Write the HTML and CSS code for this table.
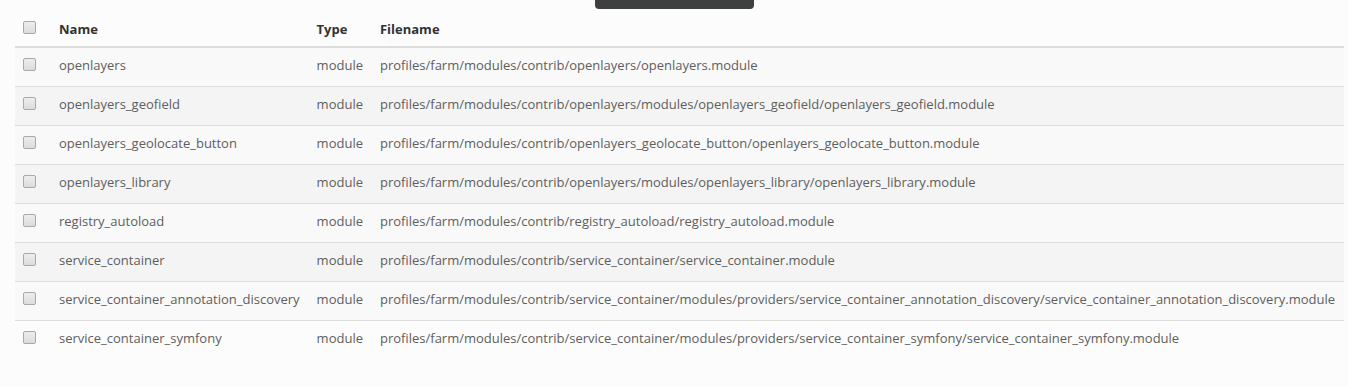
FILE: index.html
```html
<!DOCTYPE html>
<html>
<head>
<meta charset="utf-8">
<link rel="stylesheet" href="styles.css">
</head>
<body>
<div class="tip"></div>
<div class="page">
<table class="tbl">
<thead>
<tr><th class="sel"><span class="cb"></span></th><th>Name</th><th>Type</th><th>Filename</th></tr>
</thead>
<tbody>
<tr><td class="sel"><span class="cb"></span></td><td>openlayers</td><td>module</td><td>profiles/farm/modules/contrib/openlayers/openlayers.module</td></tr>
<tr><td class="sel"><span class="cb"></span></td><td>openlayers_geofield</td><td>module</td><td>profiles/farm/modules/contrib/openlayers/modules/openlayers_geofield/openlayers_geofield.module</td></tr>
<tr><td class="sel"><span class="cb"></span></td><td>openlayers_geolocate_button</td><td>module</td><td>profiles/farm/modules/contrib/openlayers_geolocate_button/openlayers_geolocate_button.module</td></tr>
<tr><td class="sel"><span class="cb"></span></td><td>openlayers_library</td><td>module</td><td>profiles/farm/modules/contrib/openlayers/modules/openlayers_library/openlayers_library.module</td></tr>
<tr><td class="sel"><span class="cb"></span></td><td>registry_autoload</td><td>module</td><td>profiles/farm/modules/contrib/registry_autoload/registry_autoload.module</td></tr>
<tr><td class="sel"><span class="cb"></span></td><td>service_container</td><td>module</td><td>profiles/farm/modules/contrib/service_container/service_container.module</td></tr>
<tr><td class="sel"><span class="cb"></span></td><td>service_container_annotation_discovery</td><td>module</td><td>profiles/farm/modules/contrib/service_container/modules/providers/service_container_annotation_discovery/service_container_annotation_discovery.module</td></tr>
<tr class="last"><td class="sel"><span class="cb"></span></td><td>service_container_symfony</td><td>module</td><td>profiles/farm/modules/contrib/service_container/modules/providers/service_container_symfony/service_container_symfony.module</td></tr>
</tbody>
</table>
</div>
</body>
</html>
```
FILE: styles.css
```css
html, body {
  margin: 0;
  padding: 0;
  background: #fcfcfc;
}
body {
  font-family: "Open Sans", "Liberation Sans", sans-serif;
  font-size: 13px;
  color: #5e5e5e;
  position: relative;
}
.tip {
  position: absolute;
  left: 595px;
  top: 0;
  width: 159px;
  height: 9px;
  background: #3e403f;
  border-radius: 0 0 4px 4px;
}
.page {
  padding: 10px 0 0 15px;
}
.tbl {
  border-collapse: collapse;
  border-spacing: 0;
}
.tbl th {
  text-align: left;
  font-weight: 700;
  color: #333;
  padding: 9px 9px 7px 8px;
  line-height: 20px;
  border-bottom: 2px solid #dddddd;
  white-space: nowrap;
}
.tbl td {
  padding: 7px 9px 11px 8px;
  line-height: 20px;
  border-top: 1px solid #dddddd;
  white-space: nowrap;
}
.tbl tbody tr:first-child td {
  border-top: 0;
}
.tbl tbody tr:nth-child(odd) td {
  background: #f9f9f9;
}
.tbl tbody tr:nth-child(even) td {
  background: #f4f4f4;
}
.tbl tbody tr.last td {
  background: transparent;
}
.tbl .sel {
  width: 20px;
  padding-right: 8px;
}
.cb {
  display: inline-block;
  width: 11px;
  height: 11px;
  border: 1px solid #a9a9a9;
  border-radius: 2px;
  background: linear-gradient(#ededed, #dcdcdc);
  vertical-align: -1px;
  box-sizing: content-box;
}
.tbl th .cb {
  vertical-align: 0;
}
```
